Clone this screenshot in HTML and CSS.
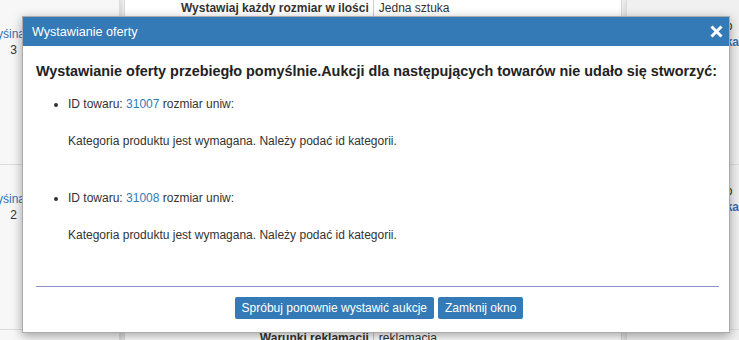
FILE: index.html
```html
<!DOCTYPE html>
<html lang="pl">

<head>
  <meta charset="UTF-8">
  <title>Wystawianie oferty</title>
  <link rel="stylesheet" href="styles.css">
</head>

<body>
  <div class="page">
    <div class="side side-left">
      <div class="side-cell">
        <div class="side-line side-link">yśina</div>
        <div class="side-line side-num">3</div>
      </div>
      <div class="side-cell">
        <div class="side-line side-link">yśina</div>
        <div class="side-line side-num">2</div>
      </div>
    </div>

    <div class="main">
      <div class="row row-top">
        <div class="cell-label">Wystawiaj każdy rozmiar w ilości</div>
        <div class="cell-value">Jedna sztuka</div>
      </div>
      <div class="row-fill"></div>
      <div class="row row-bottom">
        <div class="cell-label">Warunki reklamacji</div>
        <div class="cell-value">reklamacja</div>
      </div>
    </div>

    <div class="side side-right">
      <div class="side-cell">
        <span class="side-o">o</span>
        <span class="side-k">ka</span>
      </div>
      <div class="side-cell">
        <span class="side-o">o</span>
        <span class="side-k">ka</span>
      </div>
    </div>
  </div>

  <!-- Dialog -->
  <div class="dialog">
    <div class="dialog-title">
      <span>Wystawianie oferty</span>
      <svg class="dialog-close" width="13" height="13" viewBox="0 0 13 13">
        <path d="M1.5 1.5 L11.5 11.5 M11.5 1.5 L1.5 11.5" stroke="#fff" stroke-width="3" />
      </svg>
    </div>
    <div class="dialog-body">
      <h2>Wystawianie oferty przebiegło pomyślnie.Aukcji dla następujących towarów nie udało się stworzyć:</h2>
      <ul class="errors">
        <li>
          ID towaru: <a href="#">31007</a> rozmiar uniw:
          <p>Kategoria produktu jest wymagana. Należy podać id kategorii.</p>
        </li>
        <li>
          ID towaru: <a href="#">31008</a> rozmiar uniw:
          <p>Kategoria produktu jest wymagana. Należy podać id kategorii.</p>
        </li>
      </ul>
    </div>
    <div class="dialog-buttons">
      <button class="btn">Spróbuj ponownie wystawić aukcje</button>
      <button class="btn">Zamknij okno</button>
    </div>
  </div>
</body>

</html>
```

FILE: styles.css
```css
/* General */
body {
  margin: 0;
  font-family: 'Liberation Sans', Arial, sans-serif;
  font-size: 12px;
  color: #333;
  background-color: #f4f4f4;
  overflow: hidden;
  height: 340px;
}

.page {
  display: flex;
  height: 346px;
}

/* Background panels */
.side {
  display: flex;
  flex-direction: column;
}

.side-left {
  width: 121px;
  background-color: #f7f7f7;
  box-shadow: 2px 0 6px rgba(0, 0, 0, 0.15);
  border-right: 1px solid #ddd;
}

.side-right {
  flex: 1;
  background-color: #f0f0f0;
  border-left: 1px solid #ddd;
  margin-left: 4px;
  box-shadow: -2px 0 6px rgba(0, 0, 0, 0.12);
}

.side-cell {
  height: 165px;
  box-sizing: border-box;
  padding-top: 26px;
  border-bottom: 1px solid #ddd;
  display: flex;
  flex-direction: column;
}

.side-left .side-cell {
  width: 25px;
}

.side-line {
  display: flex;
  justify-content: flex-end;
  white-space: nowrap;
  line-height: 16px;
}

.side-link {
  color: #3a6fb5;
}

.side-num {
  padding-right: 8px;
}

.side-right .side-cell {
  padding-left: 99px;
  padding-top: 18px;
}

.side-o {
  color: #333;
  line-height: 16px;
}

.side-k {
  color: #3a6fb5;
  font-weight: bold;
  line-height: 16px;
}

.main {
  width: 505px;
  margin-left: 4px;
  background-color: #fff;
  border-left: 1px solid #ddd;
  border-right: 1px solid #ddd;
  display: flex;
  flex-direction: column;
}

.row {
  display: flex;
  height: 16px;
  line-height: 16px;
}

.row-top {
  border-bottom: 1px solid #ddd;
}

.row-fill {
  flex: 1;
}

.cell-label {
  width: 244px;
  text-align: right;
  padding-right: 4px;
  font-weight: bold;
  border-right: 1px solid #ccc;
}

.cell-value {
  padding-left: 5px;
}

/* Dialog */
.dialog {
  position: absolute;
  left: 22px;
  top: 16px;
  width: 706px;
  height: 315px;
  background-color: #fff;
  border: 1px solid #aaa;
  box-shadow: 0 3px 10px rgba(0, 0, 0, 0.35);
  display: flex;
  flex-direction: column;
}

.dialog-title {
  height: 29px;
  background-color: #337ab7;
  color: #fff;
  font-size: 12.6px;
  display: flex;
  align-items: center;
  justify-content: space-between;
  padding: 0 6px 0 9px;
}

.dialog-close {
  display: block;
  margin-top: -1px;
}

.dialog-body {
  flex: 1;
  margin: 0 10px 0 13px;
  border-bottom: 1px solid #8f8fd0;
}

.dialog-body h2 {
  font-size: 14.4px;
  line-height: 20px;
  color: #222;
  margin: 15px 0 15px 0;
}

.errors {
  margin: 0;
  padding-left: 32px;
}

.errors li {
  line-height: 16px;
  margin-bottom: 41px;
}

.errors a {
  color: #337ab7;
  text-decoration: none;
}

.errors p {
  margin: 21px 0 0 0;
}

.dialog-buttons {
  display: flex;
  justify-content: center;
  gap: 4px;
  padding: 10px 0 13px 6px;
}

.btn {
  font-family: 'Liberation Sans', Arial, sans-serif;
  font-size: 12px;
  height: 22px;
  padding: 0 7px;
  background-color: #337ab7;
  color: #fff;
  border: none;
  border-radius: 2px;
}
```
